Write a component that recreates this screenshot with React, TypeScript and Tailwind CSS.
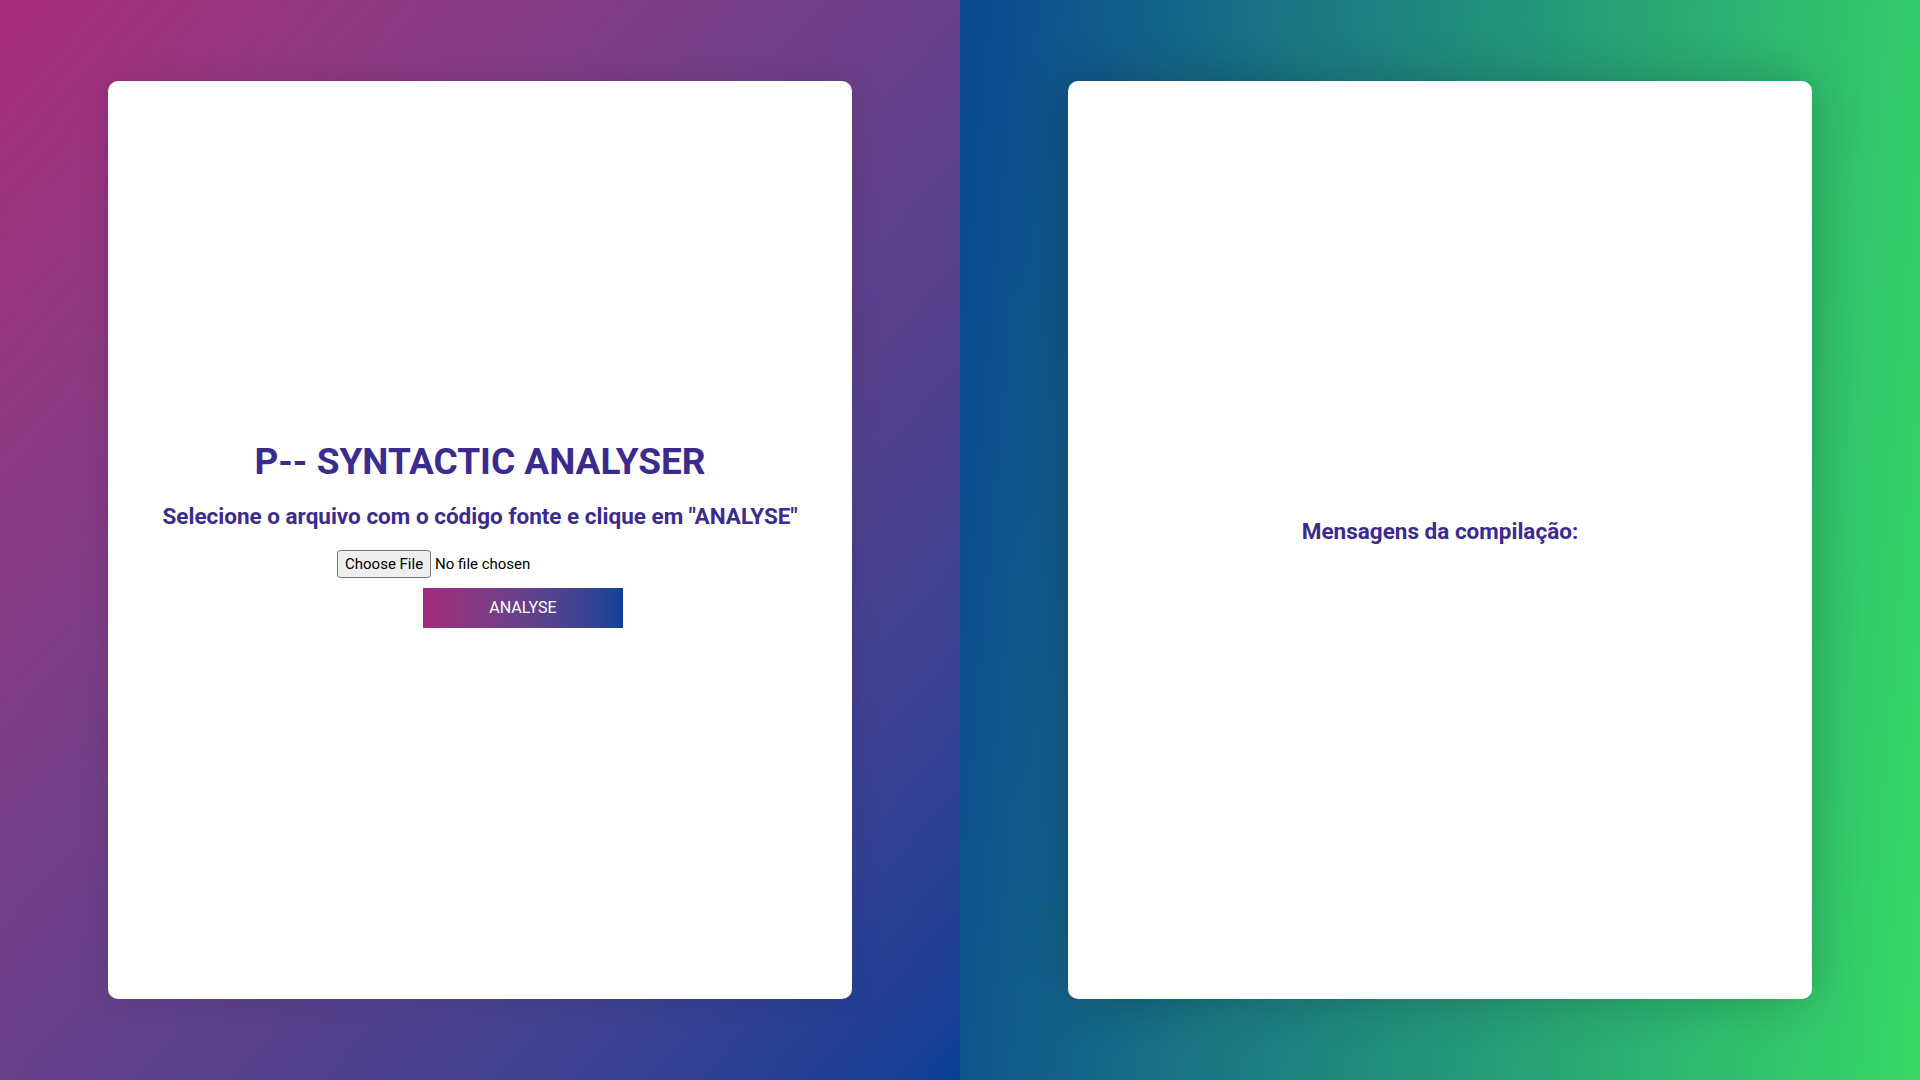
const App = () => {
  return (
    <div className="flex w-full h-screen font-['Roboto',sans-serif]">
      {/* Left side: analyser form */}
      <section className="w-1/2 h-full flex items-center justify-center bg-gradient-to-br from-[#a72a7b] to-[#083f97]">
        <div className="w-[744px] h-[918px] bg-white rounded-[10px] shadow-[0_0_30px_rgba(0,0,0,0.1)] flex flex-col items-center justify-center pb-[12px]">
          <h1 className="text-[37px] font-bold text-[#3b2b8f] leading-[44px]">P-- SYNTACTIC ANALYSER</h1>
          <h2 className="mt-[18px] text-[22.5px] font-bold text-[#3b2b8f] leading-[28px]">
            Selecione o arquivo com o código fonte e clique em "ANALYSE"
          </h2>
          <div className="mt-[20px] flex flex-col items-end w-[286px]">
            <input
              type="file"
              className="w-[286px] text-[15px] text-black file:mr-[4px] file:px-[7px] file:py-[4px] file:text-[15px] file:leading-[18px] file:border file:border-solid file:border-[#767676] file:rounded-[3px] file:bg-[#efefef] file:text-black"
            />
            <button className="mt-[10px] w-[200px] h-[40px] text-white text-[16px] bg-gradient-to-r from-[#a2287a] to-[#0a4298]">
              ANALYSE
            </button>
          </div>
        </div>
      </section>

      {/* Right side: compiler messages */}
      <section className="w-1/2 h-full flex items-center justify-center bg-[linear-gradient(95deg,#0b4891,#38d866)]">
        <div className="w-[744px] h-[918px] bg-white rounded-[10px] shadow-[0_0_50px_rgba(0,0,0,0.22)] flex flex-col items-center justify-center">
          <h2 className="text-[22.5px] font-bold text-[#3b2b8f] leading-[28px] mb-[18px]">Mensagens da compilação:</h2>
          <div className="w-full" />
        </div>
      </section>
    </div>
  );
};

export default App;
